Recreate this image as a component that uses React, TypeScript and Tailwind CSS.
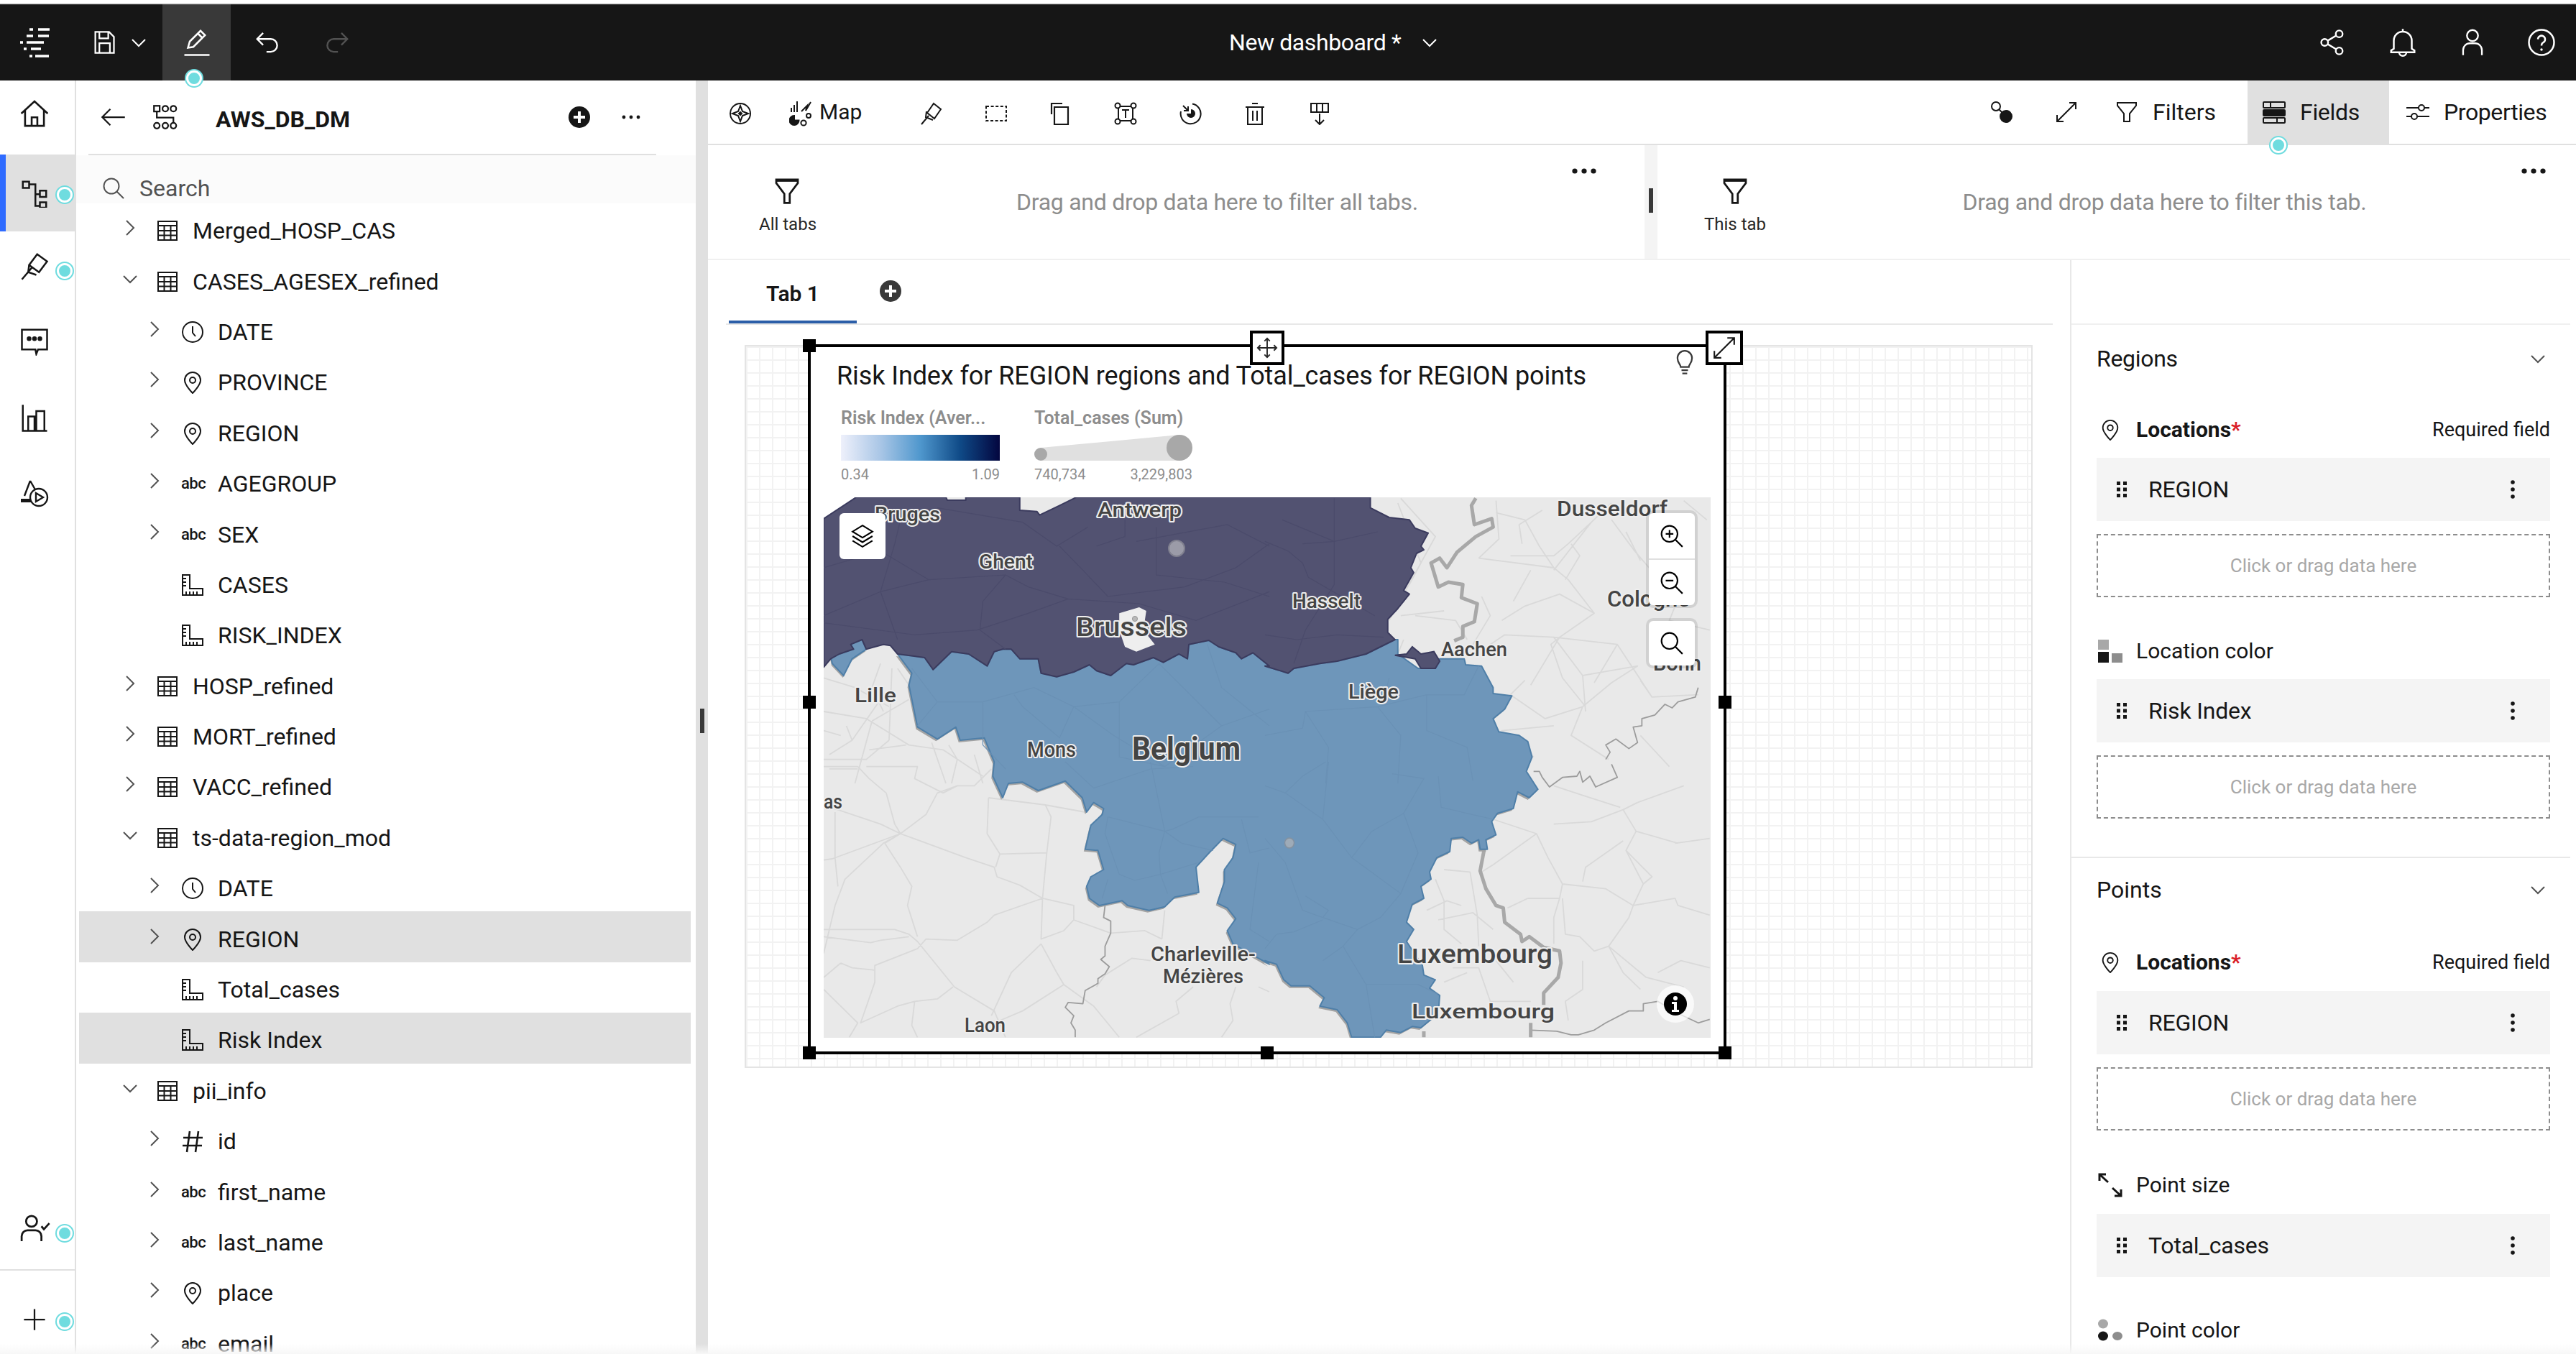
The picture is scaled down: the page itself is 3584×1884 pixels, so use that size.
import type { ReactNode } from "react";

type Pt = number[];

// map pieces were traced from four crops, each with its own scale
const q7 = (p: Pt[]) => p.map(([x, y]) => [x / 2.529, y / 3 - 2]);
const q8 = (p: Pt[]) => p.map(([x, y]) => [x / 2.489 + 614, y / 3 - 2]);
const q9 = (p: Pt[]) => p.map(([x, y]) => [x / 2.529, y / 3 + 368]);
const q10 = (p: Pt[]) => p.map(([x, y]) => [x / 2.489 + 614, y / 3 + 368]);
const pts = (p: Pt[]) => p.map(([x, y]) => `${x.toFixed(1)},${y.toFixed(1)}`).join(" ");

const LANG_BORDER: Pt[] = [
  ...q7([[0,715],[25,680],[55,660],[105,640],[95,620],[135,600],[150,640],[210,620],[235,625],[260,660],[355,675],[385,725],[450,650],[510,660],[575,710],[600,650],[630,640],[660,640],[690,680],[755,680],[765,740],[820,755],[880,735],[935,705],[960,730],[1010,750],[1065,700],[1090,705],[1160,675],[1195,695],[1250,660],[1280,680],[1285,620],[1355,603],[1390,630],[1450,655],[1470,680],[1510,655],[1568,710]]),
  ...q8([[0,710],[80,740],[100,720],[190,700],[250,690],[350,660],[450,600]]),
];

const FLANDERS: Pt[] = [
  ...q7([[0,95],[115,5],[430,5],[435,18],[500,18],[500,5],[690,5],[690,60],[750,65],[760,80],[830,40],[890,5]]),
  ...q8([[365,5],[365,50],[430,90],[500,100],[520,135],[565,155],[540,210],[550,225],[525,240],[505,300],[515,320],[480,395],[500,410],[460,470],[425,515],[425,570]]),
  ...[...LANG_BORDER].reverse(),
];

const VOEREN = q8([[450,665],[490,660],[510,630],[540,660],[585,650],[605,690],[590,720],[540,720],[520,680]]);
const COMINES = q7([[25,670],[55,660],[105,640],[95,620],[135,600],[150,640],[100,680],[70,750],[30,700]]);
const BRUSSELS = q7([[1040,490],[1110,465],[1135,480],[1125,560],[1165,620],[1100,650],[1060,630],[1040,560]]);

const WALLONIA: Pt[] = [
  ...LANG_BORDER.slice(9),
  ...q8([[460,600],[460,660],[530,720],[590,720],[605,680],[690,680],[695,705],[750,710],[790,800],[790,825],[855,835],[830,890],[790,930],[810,985],[880,1000],[910,1025],[925,1090],[905,1150]]),
  ...q10([[905,40],[945,115],[915,150],[875,125],[860,195],[805,215],[785,250],[800,305],[765,325],[770,365],[745,365],[740,325],[715,340],[685,315],[645,320],[640,375],[595,400],[570,460],[575,490],[540,520],[550,570],[510,595],[490,670],[515,700],[490,750],[545,850],[550,890],[590,910],[570,945],[605,975],[600,1050],[540,1110],[510,1105],[470,1130],[420,1120],[400,1150],[300,1150],[285,1090],[250,1035],[190,1020],[205,985],[155,935],[90,935],[65,910],[40,845],[0,830]]),
  ...q9([[1568,845],[1530,820],[1440,760],[1420,705],[1450,655],[1420,610],[1385,590],[1410,500],[1410,450],[1440,400],[1450,345],[1405,320],[1360,375],[1310,440],[1320,545],[1235,565],[1200,605],[1145,620],[1070,600],[1050,580],[970,600],[935,570],[925,520],[940,480],[985,450],[965,370],[920,365],[940,265],[980,220],[985,195],[950,170],[925,210],[910,150],[850,80],[755,120],[700,85],[650,90],[630,150],[595,60],[600,0]]),
  ...q7([[565,1010],[480,1020],[465,965],[400,1015],[330,965],[300,790],[310,740]]),
];

const ROADS_Q7 = "M0 900L150 930L300 1040L420 1060L560 1170M170 940L110 1200M0 1100H150L230 1020M230 1020L240 720M100 1020L200 850M0 760L110 800L230 880M300 850L170 940M380 1030L430 1200M160 1060L290 1040M20 1140H120M200 700L170 800L210 900M80 960L100 1020L20 1080M260 720L300 790M0 980L60 1000M440 1040L470 1100L450 1200M530 1080L560 1200";
const ROADS_Q8 = "M470 10L590 170L430 520M740 260L1000 300L1050 350L1140 490L1020 590L920 790M850 250H1000L1050 200L1130 110L1200 30M820 520L900 460L1020 410L1140 490M780 620L830 580L1000 590L1220 620L1340 840M900 770L850 830L970 930L1100 880L1200 780L1290 710L1100 750L1000 590M1000 960L820 980L930 1090M1100 880L1060 1000L1190 1100M900 100L950 210L1000 300M1300 770L1340 840L1500 830M1000 310L1130 110M460 30L540 280L500 370M520 500L660 520L700 600M800 20L810 180L740 260M1200 100L1280 230L1330 300M1450 20L1530 100M750 420L780 500L720 620M890 200L880 120L960 60M1060 200L1090 250L1040 350M920 310L860 440M1020 590L990 620L1030 760L1110 880M1220 620L1140 780M1300 1000L1400 1130M1420 460L1400 520L1540 560M470 500L620 480M1100 750L1110 900M480 600L460 660M900 100L800 70M1250 150L1300 270";
const ROADS_Q9 = "M0 700H250L300 720L330 750L460 940L600 1040L640 1150M300 730L200 745L165 755L0 730M270 300L500 400L600 440L610 480L690 515L770 570L880 600L880 660L1010 715L1130 705L1190 740M270 300L30 405L0 410M270 300L360 220L400 130L470 100L530 100L590 30M270 300L200 260L0 180M0 950L120 1090L90 1150M270 300L210 340L75 490L40 600L0 800M270 300L215 340L270 440L310 520L295 600L330 730M770 570L600 640L575 670L470 745L360 740L330 780L180 850L180 920L130 1090L260 1020L320 1000L400 990L455 940M785 380L770 570L765 740L845 705L880 660M765 760L820 880L845 930L700 1040L620 1080M620 385L785 380L800 230L780 180M580 150L575 300L620 385L605 440M765 760L660 880L590 1060M845 930L950 1020L1040 1150M1190 740L1200 620M1150 830L1085 820L990 890L960 940M1300 940L1240 1000L1250 1050L1100 1150M1450 940L1430 1010L1440 1080L1400 1150M1530 940L1568 960M40 210V400L50 520M0 20H120L160 70L220 130L250 260L270 300M150 20H330L320 70L420 130L470 100M580 150L780 180L920 210M60 840L100 860L180 870M0 900L60 840M320 1000L310 1100L330 1150";
const ROADS_Q10 = "M790 240L940 300L980 400L1030 510L1180 530L1275 600L1260 650L1190 770L1240 880L1300 950M1000 260L1130 250L1240 200L1285 290L1250 370L1310 510L1275 600L1420 570L1430 600M940 300L790 430L750 460M1290 170L1240 200M1290 170L1450 100M1030 510L1020 570L1000 650L1000 760M1030 570L1040 720L1090 730L1140 790L1190 770M840 610L910 570L1020 570M600 660L720 630L790 700M620 450L710 460L735 640L740 770M590 490L620 580L620 700L680 760M650 860L740 860L780 1000L920 1000M1100 830L1100 950L1040 1000L1050 1080M1285 290L1430 340M1250 370L1340 480L1310 510M1000 100L1100 140L1230 190M1360 880L1440 830L1540 860M1190 770L1320 900L1450 940M560 620L630 580L680 600M800 830L860 920M620 920L700 880M1420 340L1540 320M1430 600L1540 640M1100 500L1110 440L1240 330";

const INNER_DARK_Q7 = "M270 100L250 200L200 400L260 600M370 350L200 400L0 500M0 530L320 580L540 560L720 490L860 430L1110 450L1310 520L1568 400M640 330L560 440L550 560L640 640M830 210L920 320L1000 420L1270 380L1450 300L1568 200M1060 100V170L960 210M930 130L820 210L700 110L400 50M1170 130V330L1410 360L1568 420M1100 190L1420 120L1568 210M0 300L200 230L370 350L640 330L720 380L860 430";
const INNER_DARK_Q8 = "M0 190L80 230L130 280L150 340M60 100L240 190L390 150M130 200L240 190V370L140 560L100 700M0 580L110 600L250 580L410 590M150 340L380 500M240 10V190";
const INNER_BLUE_Q7 = "M310 720L400 860L560 860L740 800L880 880L1040 860L1180 700M880 880L830 1010L700 880L670 830M400 860L330 960M1040 860V1090L1200 1130L1400 960L1568 890M560 860V1040L640 1140M880 880L1020 1000L1200 1130M1180 700L1400 960M1350 620L1400 800L1568 960";
const INNER_BLUE_Q8 = "M0 1000L130 970L140 900L390 880L560 830L690 830L740 710M390 880L470 1000L460 1200M140 900L220 1050L210 1200M560 830V980L700 1050L720 1190M430 760L420 810";
const INNER_BLUE_Q9 = "M1000 230L1200 290L1260 340L1370 370M1200 290L1230 280L1320 230L1530 230M1200 290L1180 380L1185 470L1095 495L1040 470L990 300L1000 230M1185 470L1320 420M850 0L950 110M1150 0L1200 290M1470 240L1500 380L1568 360M1530 420L1500 700L1568 750M1000 490L980 570M1185 470L1210 550M950 110L1150 30L1300 20";
const INNER_BLUE_Q10 = "M0 100L70 130L200 240L300 400L470 550L400 650L320 700L200 650L130 620L70 420L0 320M200 240L220 0M70 130L130 60L210 0M300 400L370 290L480 215L550 70L440 50M480 215L530 380L470 550M320 700L270 770L350 930L380 1150M200 650L220 620L140 560M0 780L40 720L100 710L200 660M350 930H530L600 970M600 60L610 190L790 240M200 830L270 770";

const T_Q7 = "scale(0.3954 0.3333) translate(0 -6)";
const T_Q8 = "translate(614 -2) scale(0.4018 0.3333)";
const T_Q9 = "translate(0 368) scale(0.3954 0.3333)";
const T_Q10 = "translate(614 368) scale(0.4018 0.3333)";

const LABELS = [
  { t: "Bruges", x: 71, w: 91, y: 23, s: 28 },
  { t: "Antwerp", x: 381, w: 117, y: 17, s: 28 },
  { t: "Ghent", x: 216, w: 75, y: 90, s: 27 },
  { t: "Brussels", x: 351, w: 154, y: 181, s: 36 },
  { t: "Lille", x: 43, w: 58, y: 275, s: 28 },
  { t: "Mons", x: 283, w: 68, y: 351, s: 29 },
  { t: "Belgium", x: 429, w: 151, y: 350, s: 44, b: true },
  { t: "Hasselt", x: 652, w: 95, y: 144, s: 28 },
  { t: "Liège", x: 730, w: 70, y: 270, s: 28 },
  { t: "Aachen", x: 859, w: 92, y: 211, s: 28 },
  { t: "Dusseldorf", x: 1020, w: 154, y: 15, s: 30 },
  { t: "Cologne", x: 1090, w: 115, y: 141, s: 31 },
  { t: "Bonn", x: 1154, w: 67, y: 230, s: 30 },
  { t: "as", x: 0, w: 26, y: 423, s: 28 },
  { t: "Laon", x: 196, w: 57, y: 735, s: 27 },
  { t: "Charleville-", x: 455, w: 146, y: 635, s: 28 },
  { t: "Mézières", x: 472, w: 112, y: 666, s: 28 },
  { t: "Luxembourg", x: 798, w: 216, y: 636, s: 36 },
  { t: "Luxembourg", x: 818, w: 199, y: 715, s: 28 },
];

function Ic({ children, size = 32, box = 32, className = "" }: { children: ReactNode; size?: number; box?: number; className?: string }) {
  return (
    <svg width={size} height={size} viewBox={`0 0 ${box} ${box}`} fill="none" stroke="currentColor" strokeWidth={2} className={`shrink-0 ${className}`}>
      {children}
    </svg>
  );
}

const Down = ({ className = "" }: { className?: string }) => (
  <Ic size={24} box={24} className={className}><path d="M3 8l9 9 9-9" /></Ic>
);
const Right = ({ className = "" }: { className?: string }) => (
  <Ic size={24} box={24} className={className}><path d="M7 2l10 10L7 22" /></Ic>
);
const TableIcon = () => (
  <Ic><path d="M3 3h26v26H3zM3 9h26M3 16h26M3 22.5h26M11.5 9v20M20.5 9v20" /></Ic>
);
const ClockIcon = () => (
  <Ic><circle cx="16" cy="16" r="14" /><path d="M16 8v9l4 5" /></Ic>
);
const PinDrop = () => (
  <Ic><path d="M16 2A11 11 0 0 0 5 13c0 7 11 18 11 18s11-11 11-18A11 11 0 0 0 16 2z" /><circle cx="16" cy="13" r="4" /></Ic>
);
const RulerIcon = () => (
  <Ic><path d="M2 2h10v19h18v9H2zM2 7h5M2 12h5M2 17h5M7 25v5M12 25v5M17 25v5M22 25v5" /></Ic>
);
const HashIcon = () => (
  <Ic><path d="M12 2L8 31M24 2l-4 29M3 11h27M2 22h27" strokeWidth={2.6} /></Ic>
);
const SearchIcon = () => (
  <Ic><circle cx="13" cy="13" r="10.5" /><path d="M20.5 20.5L30 30" /></Ic>
);
const Funnel = ({ className = "" }: { className?: string }) => (
  <Ic size={40} box={32} className={className}><path d="M4 3h24v4l-9 12v10h-6V19L4 7z" strokeWidth={2.2} /><path d="M4 4h24" strokeWidth={3} /></Ic>
);
const Dots = () => (
  <svg width="34" height="8" viewBox="0 0 34 8" className="shrink-0"><circle cx="4" cy="4" r="3.6" fill="#161616" /><circle cx="17" cy="4" r="3.6" fill="#161616" /><circle cx="30" cy="4" r="3.6" fill="#161616" /></svg>
);
const SmallDots = () => (
  <svg width="26" height="6" viewBox="0 0 26 6" className="shrink-0"><circle cx="3" cy="3" r="2.4" fill="#161616" /><circle cx="13" cy="3" r="2.4" fill="#161616" /><circle cx="23" cy="3" r="2.4" fill="#161616" /></svg>
);
const Kebab = () => (
  <svg width="8" height="28" viewBox="0 0 8 28" className="shrink-0"><circle cx="4" cy="4" r="2.8" fill="#161616" /><circle cx="4" cy="14" r="2.8" fill="#161616" /><circle cx="4" cy="24" r="2.8" fill="#161616" /></svg>
);
const Grip = () => (
  <svg width="14" height="22" viewBox="0 0 14 22" className="shrink-0" fill="#161616">
    <rect width="5" height="5" /><rect x="9" width="5" height="5" /><rect y="8.5" width="5" height="5" /><rect x="9" y="8.5" width="5" height="5" /><rect y="17" width="5" height="5" /><rect x="9" y="17" width="5" height="5" />
  </svg>
);
const AddFilled = ({ fill }: { fill: string }) => (
  <svg width="32" height="32" viewBox="0 0 32 32" className="shrink-0"><circle cx="16" cy="16" r="15" fill={fill} /><path d="M16 8v16M8 16h16" stroke="#fff" strokeWidth={4} /></svg>
);

const Dot = ({ className }: { className: string }) => (
  <span className={`absolute w-[22px] h-[22px] rounded-full bg-[#6fdcdf] border-[3px] border-white ring-2 ring-[#6fdcdf] ${className}`} />
);

type Row = { label: string; level: 1 | 2; kind: string; open?: boolean; leaf?: boolean; sel?: boolean };

const ROWS: Row[] = [
  { label: "Merged_HOSP_CAS", level: 1, kind: "table" },
  { label: "CASES_AGESEX_refined", level: 1, kind: "table", open: true },
  { label: "DATE", level: 2, kind: "clock" },
  { label: "PROVINCE", level: 2, kind: "loc" },
  { label: "REGION", level: 2, kind: "loc" },
  { label: "AGEGROUP", level: 2, kind: "abc" },
  { label: "SEX", level: 2, kind: "abc" },
  { label: "CASES", level: 2, kind: "ruler", leaf: true },
  { label: "RISK_INDEX", level: 2, kind: "ruler", leaf: true },
  { label: "HOSP_refined", level: 1, kind: "table" },
  { label: "MORT_refined", level: 1, kind: "table" },
  { label: "VACC_refined", level: 1, kind: "table" },
  { label: "ts-data-region_mod", level: 1, kind: "table", open: true },
  { label: "DATE", level: 2, kind: "clock" },
  { label: "REGION", level: 2, kind: "loc", sel: true },
  { label: "Total_cases", level: 2, kind: "ruler", leaf: true },
  { label: "Risk Index", level: 2, kind: "ruler", leaf: true, sel: true },
  { label: "pii_info", level: 1, kind: "table", open: true },
  { label: "id", level: 2, kind: "hash" },
  { label: "first_name", level: 2, kind: "abc" },
  { label: "last_name", level: 2, kind: "abc" },
  { label: "place", level: 2, kind: "loc" },
  { label: "email", level: 2, kind: "abc" },
];

function KindIcon({ kind }: { kind: string }) {
  if (kind === "table") return <TableIcon />;
  if (kind === "clock") return <ClockIcon />;
  if (kind === "loc") return <PinDrop />;
  if (kind === "ruler") return <RulerIcon />;
  if (kind === "hash") return <HashIcon />;
  return <span className="w-[32px] text-center text-[22px] font-medium leading-none tracking-[-0.5px]">abc</span>;
}

function TreeRow({ row }: { row: Row }) {
  return (
    <div className={`flex items-center h-[70.4px] w-[851px] ml-[4px] shrink-0 pt-[6px] ${row.level === 1 ? "pl-[59px]" : "pl-[93px]"} ${row.sel ? "bg-[#e0e0e0]" : ""}`}>
      <span className="w-[24px] h-[24px] mb-[8px] text-[#525252] shrink-0">
        {row.leaf ? null : row.open ? <Down /> : <Right />}
      </span>
      <span className={`flex justify-center ${row.level === 1 ? "ml-[24px]" : "ml-[25px]"}`}><KindIcon kind={row.kind} /></span>
      <span className="ml-[19px] text-[32px] leading-none text-[#161616] whitespace-nowrap">{row.label}</span>
    </div>
  );
}

function Header() {
  return (
    <div className="flex items-center h-[106px] bg-[#161616] text-white relative shrink-0">
      <span className="w-[96px] flex justify-center">
        <svg width="42" height="42" viewBox="0 0 42 42" stroke="#fff" strokeWidth={3.4} fill="none">
          <path d="M26 3h16M14 3h5M26 12h15M10 12h9M10 21h24M1 21h4M16 30h14M6 30h4M22 40h19M14 40h4" />
        </svg>
      </span>
      <span className="ml-[1px] w-[96px] flex justify-center"><Ic size={36}><path d="M5 3h17l6 6v20H5zM10 3v8h11V3M10 29V17h13v12" /></Ic></span>
      <Down className="ml-[-12px]" />
      <span className="relative ml-[21px] w-[95px] h-[106px] bg-[#393939] flex items-center justify-center">
        <Ic size={40}><path d="M6 22l2-7L20 3l5 5-13 13zM17 6l5 5M2 30h28" /></Ic>
      </span>
      <span className="w-[99px] ml-[1px] flex justify-center"><Ic size={38}><path d="M11 5L4 12l7 7M4 12h16a7.5 7.5 0 0 1 0 15h-5" /></Ic></span>
      <span className="w-[96px] flex justify-center text-[#525252]"><Ic size={38}><path d="M21 5l7 7-7 7M28 12H12a7.5 7.5 0 0 0 0 15h5" /></Ic></span>
      <span className="ml-[1193px] text-[32px] leading-none tracking-[-0.4px] whitespace-nowrap">New dashboard *</span>
      <Down className="ml-[28px]" />
      <div className="ml-auto flex items-center pr-[0px]">
        <span className="w-[98px] flex justify-center"><Ic size={38}><circle cx="7" cy="16" r="4" /><circle cx="24" cy="6" r="4" /><circle cx="24" cy="26" r="4" /><path d="M10.5 14l10-6M10.5 18l10 6" /></Ic></span>
        <span className="w-[98px] flex justify-center"><Ic size={40}><path d="M16 1v3M6 23V14a10 10 0 0 1 20 0v9l3 2v2H3v-2zM12 27a4 4 0 0 0 8 0" /></Ic></span>
        <span className="w-[96px] flex justify-center"><Ic size={38}><circle cx="16" cy="8" r="6.5" /><path d="M5 31v-6a8 8 0 0 1 8-8h6a8 8 0 0 1 8 8v6" /></Ic></span>
        <span className="w-[96px] flex justify-center"><Ic size={40}><circle cx="16" cy="16" r="14" /><path d="M12 12.5a4 4 0 1 1 6 3.5c-1.4.8-2 1.6-2 3.5" /><circle cx="16" cy="24" r="1.4" fill="currentColor" stroke="none" /></Ic></span>
      </div>
      <Dot className="left-[259px] top-[92px] z-10" />
    </div>
  );
}

function Rail() {
  const cell = "w-[104px] flex justify-center items-center pr-[8px]";
  return (
    <div className="w-[106px] shrink-0 border-r-2 border-[#e0e0e0] flex flex-col relative h-full">
      <div className={`${cell} h-[103px] pb-[12px]`}><Ic size={42}><path d="M2 16L16 3l14 13M6 12v17h20V12M13 29v-9h6v9" /></Ic></div>
      <div className="w-[104px] flex justify-center items-center h-[107px] bg-[#e0e0e0] border-l-[8px] border-[#2f6bff] pr-[16px]">
        <Ic size={40}><rect x="3" y="3" width="7" height="7" /><path d="M10 6h7v24h5M17 17h5" /><rect x="22" y="13" width="7" height="7" /><rect x="22" y="26" width="7" height="6" /></Ic>
      </div>
      <div className={`${cell} h-[106px] pb-[10px]`}><Ic size={40}><path d="M19 3l11 8-9 12-11-8zM13 18L2 31M10 15l-1 8 9 3" /></Ic></div>
      <div className={`${cell} h-[106px] pb-[12px]`}><Ic size={40}><path d="M2 3h28v22H20l-2 5 -1-5H2z" /><circle cx="10" cy="13" r="1.6" fill="currentColor" /><circle cx="16" cy="13" r="1.6" fill="currentColor" /><circle cx="22" cy="13" r="1.6" fill="currentColor" /></Ic></div>
      <div className={`${cell} h-[106px] pb-[10px]`}><Ic size={40}><path d="M3 1v29h27M9 30V14h7v16M18 30V8h9v22" /></Ic></div>
      <div className={`${cell} h-[106px] pb-[10px]`}>
        <svg width="40" height="40" viewBox="0 0 40 40" fill="none" stroke="#161616" strokeWidth={2.4}>
          <path d="M14 1l-8 21M14 1l8 14" /><rect x="1" y="26" width="15" height="5" fill="#161616" stroke="none" />
          <circle cx="26" cy="24" r="12" fill="#fff" /><path d="M22 18l10 6-10 6z" />
        </svg>
      </div>
      <div className="mt-auto flex flex-col">
        <div className={`${cell} h-[116px] border-b-2 border-[#e0e0e0]`}><Ic size={44}><circle cx="13" cy="9" r="5.5" /><path d="M3 29v-5a6 6 0 0 1 6-6h8a6 6 0 0 1 6 6v5M23 14l2.5 3 5.5-6" /></Ic></div>
        <div className={`${cell} h-[116px] pt-[20px]`}><Ic size={36}><path d="M16 3v26M3 16h26" /></Ic></div>
      </div>
      <Dot className="left-[79px] top-[148px]" />
      <Dot className="left-[79px] top-[254px]" />
      <Dot className="left-[79px] top-[1593px]" />
      <Dot className="left-[79px] top-[1716px]" />
    </div>
  );
}

function DataPanel() {
  return (
    <div className="w-[862px] shrink-0 h-full overflow-hidden flex flex-col">
      <div className="h-[104px] shrink-0 ml-[17px] w-[790px] border-b-2 border-[#e0e0e0] flex items-center">
        <Ic size={36} className="ml-[17px]"><path d="M30 16H3M12 6L2 16l10 10" /></Ic>
        <Ic size={36} className="ml-[36px]"><rect x="2" y="2" width="7" height="7" /><circle cx="16" cy="5.5" r="3.5" /><circle cx="26" cy="5.5" r="3.5" /><circle cx="5.5" cy="26.5" r="3.5" /><circle cx="16" cy="26.5" r="3.5" /><circle cx="26" cy="26.5" r="3.5" /><path d="M5.5 9v7.5h20.5V23" /></Ic>
        <span className="ml-[52px] mt-[6px] text-[32px] font-bold leading-none text-[#161616] whitespace-nowrap">AWS_DB_DM</span>
        <span className="ml-auto mr-[22px] flex items-center gap-[43px]"><AddFilled fill="#161616" /><SmallDots /></span>
      </div>
      <div className="h-[67px] shrink-0 flex items-start pt-[30px] pl-[36px] bg-[#fbfbfb] text-[#525252] relative z-10">
        <SearchIcon />
        <span className="ml-[20px] text-[32px] leading-none">Search</span>
      </div>
      <div className="flex flex-col">
        {ROWS.map((r, i) => <TreeRow key={i} row={r} />)}
      </div>
    </div>
  );
}

function Toolbar() {
  const cell = "w-[90px] flex justify-center shrink-0";
  return (
    <div className="h-[90px] shrink-0 border-b-2 border-[#e0e0e0] flex items-center justify-between relative">
      <div className="flex items-center text-[#161616] mt-[4px]">
        <span className={cell}><Ic><circle cx="16" cy="16" r="14" /><path d="M16 5l3 8 8 3-8 3-3 8-3-8-8-3 8-3z" /><path d="M16 14l2 2-2 2-2-2z" fill="currentColor" /></Ic></span>
        <span className="w-[176px] flex items-center pl-[23px] shrink-0">
          <svg width="32" height="36" viewBox="0 0 32 36" fill="none" stroke="#161616" strokeWidth={2}>
            <path d="M3 10v6M7 6v10M11 1v15M17 15L25 7l-2 7 7-12" />
            <path d="M7 21a6.5 6.5 0 1 0 6.5 6.5H7z" fill="#161616" /><circle cx="20" cy="31" r="3.6" /><circle cx="27" cy="21" r="3" />
          </svg>
          <span className="ml-[10px] mb-[4px] text-[30px] leading-none">Map</span>
        </span>
        <span className={cell}><Ic><path d="M19 2l10 8-9 13-10-8zM12 19L2 31M9 13l-1 8 10 4" /></Ic></span>
        <span className={cell}><Ic><rect x="2" y="6" width="28" height="20" strokeDasharray="4 2.6" /></Ic></span>
        <span className={cell}><Ic><path d="M3 17V2h15M7 7h19v24H7z" strokeWidth={2.2} /></Ic></span>
        <span className={cell}><Ic><rect x="6" y="6" width="20" height="20" /><circle cx="5" cy="5" r="3.5" fill="#fff" /><circle cx="27" cy="5" r="3.5" fill="#fff" /><circle cx="5" cy="27" r="3.5" fill="#fff" /><circle cx="27" cy="27" r="3.5" fill="#fff" /><path d="M11 11h10M16 11v11" /></Ic></span>
        <span className={cell}><Ic><path d="M19 2.5A14 14 0 1 1 3 13M6 5l7 7M13 6v6H7" /><path d="M17 10a6 6 0 1 1-6 6h6z" fill="currentColor" stroke="none" /></Ic></span>
        <span className={cell}><Ic><path d="M12 2h8M3 7h26M6 7v24h20V7M13 12v14M19 12v14" /></Ic></span>
        <span className={cell}><Ic><rect x="4" y="2" width="24" height="12" /><path d="M12 2v12M20 2v12M16 16v15M10 25l6 6 6-6" /></Ic></span>
      </div>
      <div className="flex items-center h-[88px] w-[844px] shrink-0 text-[#161616] self-start">
        <span className={cell}><Ic><circle cx="8" cy="8" r="6" /><path d="M12 12l6 6" /><circle cx="22" cy="22" r="8" fill="currentColor" /></Ic></span>
        <span className={cell}><Ic><path d="M29 3L3 29M20 3h9v9M12 29H3v-9" /></Ic></span>
        <span className="w-[207px] flex items-center pl-[23px] shrink-0">
          <Ic><path d="M3 3h26v4l-9 11v11h-8V18L3 7z" /></Ic>
          <span className="ml-[20px] text-[32px] leading-none">Filters</span>
        </span>
        <span className="w-[197px] h-[88px] bg-[#e0e0e0] flex items-center pl-[21px] shrink-0">
          <Ic><rect x="1" y="2" width="30" height="8" rx="1" /><rect x="1" y="13" width="30" height="8" rx="1" fill="currentColor" /><rect x="1" y="24" width="30" height="7" rx="1" /><path d="M11 2v8M20 24v7" /></Ic>
          <span className="ml-[20px] text-[32px] leading-none tracking-[-0.3px]">Fields</span>
        </span>
        <span className="flex items-center pl-[24px]">
          <Ic><path d="M0 10h17M25 10h7M0 22h7M15 22h17" /><circle cx="21" cy="10" r="4" /><circle cx="11" cy="22" r="4" /></Ic>
          <span className="ml-[20px] text-[32px] leading-none tracking-[-0.4px]">Properties</span>
        </span>
      </div>
      <Dot className="left-[2174px] top-[79px] z-10" />
    </div>
  );
}

function FilterBar() {
  return (
    <div className="h-[160px] shrink-0 flex mr-[8px] border-b-2 border-[#f0f0f0]">
      <div className="w-[1303px] shrink-0 flex relative">
        <div className="w-[222px] flex flex-col items-center pt-[44px]">
          <Funnel className="ml-[-3px]" />
          <span className="mt-[14px] text-[24px] leading-none text-[#262626]">All tabs</span>
        </div>
        <span className="absolute left-[429px] top-[59px] w-[555px] text-center text-[32px] leading-[40px] tracking-[-0.27px] text-[#8d8d8d] whitespace-nowrap">Drag and drop data here to filter all tabs.</span>
        <span className="absolute left-[1202px] top-[32px]"><Dots /></span>
      </div>
      <div className="w-[18px] shrink-0 bg-[#f4f4f4] flex items-center justify-center">
        <span className="w-[6px] h-[34px] mt-[-4px] bg-[#393939]" />
      </div>
      <div className="flex-1 relative">
        <div className="w-[216px] flex flex-col items-center pt-[44px]">
          <Funnel />
          <span className="mt-[14px] text-[24px] leading-none text-[#262626]">This tab</span>
        </div>
        <span className="absolute left-[424px] top-[59px] w-[563px] text-center text-[32px] leading-[40px] tracking-[-0.27px] text-[#8d8d8d] whitespace-nowrap">Drag and drop data here to filter this tab.</span>
        <span className="absolute left-[1202px] top-[32px]"><Dots /></span>
      </div>
    </div>
  );
}

function MapView() {
  return (
    <div className="relative w-[1234px] h-[752px] ml-[18px] overflow-hidden bg-[#e9e9e9]">
      <svg width="1234" height="752" viewBox="0 0 1234 752" className="block">
        <g fill="none" stroke="#d9d9d9" strokeWidth={1.8} strokeLinejoin="round">
          <path d={ROADS_Q7} transform={T_Q7} vectorEffect="non-scaling-stroke" />
          <path d={ROADS_Q8} transform={T_Q8} vectorEffect="non-scaling-stroke" />
          <path d={ROADS_Q9} transform={T_Q9} vectorEffect="non-scaling-stroke" />
          <path d={ROADS_Q10} transform={T_Q10} vectorEffect="non-scaling-stroke" />
        </g>
        <g fill="none" stroke="#a8a8a8" strokeLinejoin="round">
          <path transform={T_Q8} strokeWidth={5} vectorEffect="non-scaling-stroke" d="M730 10L715 40L725 120L785 95L790 130L730 170L665 235L630 300L605 260L575 280L600 380L635 360L685 370L680 425L735 450L725 525L685 545L685 590L655 605" />
          <path transform={T_Q8} strokeWidth={1.8} stroke="#9c9c9c" vectorEffect="non-scaling-stroke" d="M1500 800L1490 840L1430 860L1410 885L1385 870L1350 915L1305 930V960L1275 965L1290 1030L1260 1055L1215 1015L1180 1040L1195 1070L1180 1100" />
          <path transform={T_Q9} strokeWidth={1.8} stroke="#9c9c9c" vectorEffect="non-scaling-stroke" d="M990 600L985 650L1010 665V715L990 770V810L975 825L1005 855L990 885L965 905V925L920 955L912 1010L860 1005L850 1025L880 1060L870 1090L885 1120V1150" />
          <path transform={T_Q10} strokeWidth={1.8} stroke="#9c9c9c" vectorEffect="non-scaling-stroke" d="M930 40H950L960 65L985 105L1030 65L1080 60L1090 40L1100 85L1125 60L1145 105L1220 65L1200 10M920 1120L1010 1125L1060 1140H1085L1140 1120L1180 1090L1260 1040H1310V1010L1360 1000L1430 1050L1500 1090L1540 1075" />
          <path transform={T_Q10} strokeWidth={5} vectorEffect="non-scaling-stroke" d="M760 360L745 455L765 530L800 600L825 610L830 670L885 720L890 750L915 730L965 775L1020 790L1025 840L1015 900L965 965V1015M920 1090V1150M550 1125V1150" />
        </g>
        <polygon points="0,0 46,0 0,30" fill="#ffffff" />
        <polygon points={pts(WALLONIA)} fill="#a3a3a3" transform="translate(-2 3)" />
        <polygon points={pts(COMINES)} fill="#a3a3a3" transform="translate(-1 3)" />
        <polygon points={pts(WALLONIA)} fill="#6e96ba" stroke="#4f7fa8" strokeWidth={2} strokeLinejoin="round" />
        <polygon points={pts(COMINES)} fill="#6e96ba" stroke="#4f7fa8" strokeWidth={2} />
        <polygon points={pts(FLANDERS)} fill="#525271" stroke="#3b3b5e" strokeWidth={2} strokeLinejoin="round" />
        <polygon points={pts(VOEREN)} fill="#525271" stroke="#3b3b5e" strokeWidth={2} />
        <g fill="none" stroke="#4b4b6b" strokeWidth={1.2}>
          <path d={INNER_DARK_Q7} transform={T_Q7} vectorEffect="non-scaling-stroke" />
          <path d={INNER_DARK_Q8} transform={T_Q8} vectorEffect="non-scaling-stroke" />
        </g>
        <g fill="none" stroke="#6a91b5" strokeWidth={1.2}>
          <path d={INNER_BLUE_Q7} transform={T_Q7} vectorEffect="non-scaling-stroke" />
          <path d={INNER_BLUE_Q8} transform={T_Q8} vectorEffect="non-scaling-stroke" />
          <path d={INNER_BLUE_Q9} transform={T_Q9} vectorEffect="non-scaling-stroke" />
          <path d={INNER_BLUE_Q10} transform={T_Q10} vectorEffect="non-scaling-stroke" />
        </g>
        <polygon points={pts(BRUSSELS)} fill="#eeeeee" />
        <circle cx="491" cy="71" r="11" fill="#9b9ba8" stroke="#80808f" strokeWidth={2} />
        <circle cx="433" cy="169" r="3.6" fill="#b8b8b8" stroke="#9a9a9a" />
        <ellipse cx="648" cy="481" rx="6.5" ry="7" fill="#9eabb8" stroke="#84919f" strokeWidth={1.5} />
        {LABELS.map((l, i) => (
          <text key={i} x={l.x} y={l.y} textLength={l.w} lengthAdjust="spacingAndGlyphs" fontSize={l.s} fontWeight={l.b ? 700 : 500} fontFamily="Roboto, sans-serif" dominantBaseline="central" fill="#444444" stroke="#eeeeee" strokeWidth={4} strokeLinejoin="round" paintOrder="stroke">{l.t}</text>
        ))}
      </svg>
      {/* map controls sit on top of the map */}
      <div className="absolute left-[22px] top-[22px] w-[64px] h-[64px] bg-white rounded-[6px] flex items-center justify-center text-black">
        <Ic size={34}><path d="M16 2L29 10l-13 8L3 10zM3 16l13 8 13-8M3 22l13 8 13-8" /></Ic>
      </div>
      <div className="absolute left-[1148px] top-[22px] w-[64px] bg-white rounded-[6px] shadow-[0_0_0_4px_rgba(0,0,0,0.1)] text-black">
        <div className="h-[65px] flex items-center justify-center border-b-2 border-[#e0e0e0]"><Ic size={34}><circle cx="13" cy="13" r="10.5" /><path d="M20.5 20.5L30 30M13 8v10M8 13h10" /></Ic></div>
        <div className="h-[63px] flex items-center justify-center"><Ic size={34}><circle cx="13" cy="13" r="10.5" /><path d="M20.5 20.5L30 30M8 13h10" /></Ic></div>
      </div>
      <div className="absolute left-[1148px] top-[172px] w-[64px] h-[62px] bg-white rounded-[6px] shadow-[0_0_0_4px_rgba(0,0,0,0.1)] flex items-center justify-center text-black">
        <Ic size={34}><circle cx="13" cy="13" r="10.5" /><path d="M20.5 20.5L30 30" /></Ic>
      </div>
      <div className="absolute left-[1159px] top-[679px] w-[52px] h-[52px] rounded-full bg-white/70 flex items-center justify-center">
        <svg width="32" height="32" viewBox="0 0 32 32"><circle cx="16" cy="16" r="16" fill="#000" /><circle cx="16" cy="8" r="3" fill="#fff" /><path d="M11 13h7v11h3v3H11v-3h3v-8h-3z" fill="#fff" /></svg>
      </div>
    </div>
  );
}

const Handle = ({ className }: { className: string }) => (
  <span className={`absolute w-[18px] h-[18px] bg-black ${className}`} />
);

function Widget() {
  return (
    <div className="absolute left-[86px] top-[-3px] w-[1278px] h-[988px] border-4 border-black bg-white">
      <div className="h-[80px] pl-[36px] flex items-center">
        <span className="text-[36px] leading-none tracking-[-0.1px] text-[#161616] whitespace-nowrap">Risk Index for REGION regions and Total_cases for REGION points</span>
      </div>
      <div className="h-[129px] pl-[42px] flex gap-[48px]">
        <div className="w-[221px] flex flex-col pt-[4px]">
          <span className="h-[30px] text-[25px] font-semibold leading-[30px] text-[#8d8d8d] whitespace-nowrap">Risk Index (Aver...</span>
          <div className="mt-[8px] h-[36px] bg-[linear-gradient(to_right,#eef0fb,#a9c6e6_25%,#4f97cd_50%,#0f4a87_75%,#03063f)]" />
          <div className="mt-[6px] h-[26px] flex justify-between text-[20px] leading-[26px] text-[#8d8d8d]"><span>0.34</span><span>1.09</span></div>
        </div>
        <div className="w-[220px] flex flex-col pt-[4px]">
          <span className="h-[30px] text-[25px] font-semibold leading-[30px] text-[#8d8d8d] whitespace-nowrap">Total_cases (Sum)</span>
          <svg width="220" height="36" viewBox="0 0 220 36" className="mt-[8px] block">
            <polygon points="9,18 202,0 202,36 9,36" fill="#e0e0e0" />
            <circle cx="9" cy="27" r="9" fill="#a8a8a8" />
            <circle cx="202" cy="18" r="18" fill="#a8a8a8" />
          </svg>
          <div className="mt-[6px] h-[26px] flex justify-between text-[20px] leading-[26px] text-[#8d8d8d]"><span>740,734</span><span>3,229,803</span></div>
        </div>
      </div>
      <MapView />
      <span className="absolute left-[1198px] top-[4px] text-[#393939]">
        <Ic size={36}><path d="M11 21c0-3-4-5-4-11a9 9 0 0 1 18 0c0 6-4 8-4 11zM12 25h8M13 29h6" /></Ic>
      </span>
      <Handle className="left-[-11px] top-[-11px]" />
      <Handle className="right-[-11px] top-[-11px]" />
      <Handle className="left-[-11px] bottom-[-11px]" />
      <Handle className="right-[-11px] bottom-[-11px]" />
      <Handle className="left-[-11px] top-[485px]" />
      <Handle className="right-[-11px] top-[485px]" />
      <Handle className="left-[626px] bottom-[-11px]" />
      <div className="absolute left-[611px] top-[-23px] w-[48px] h-[48px] bg-white border-4 border-black flex items-center justify-center text-[#262626]">
        <Ic size={30}><path d="M16 2v28M2 16h28M12 6l4-4 4 4M12 26l4 4 4-4M6 12l-4 4 4 4M26 12l4 4-4 4" /></Ic>
      </div>
      <div className="absolute left-[1245px] top-[-23px] w-[52px] h-[48px] bg-white border-4 border-black flex items-center justify-center text-[#161616]">
        <Ic size={34}><path d="M29 3L3 29M20 3h9v9M12 29H3v-9" /></Ic>
      </div>
    </div>
  );
}

function FieldBox({ label }: { label: string }) {
  return (
    <div className="h-[88px] bg-[#f4f4f4] flex items-center pl-[28px] pr-[48px]">
      <Grip />
      <span className="ml-[30px] text-[32px] leading-none tracking-[-0.2px] text-[#161616] flex-1">{label}</span>
      <Kebab />
    </div>
  );
}

const DropZone = () => (
  <div className="h-[88px] border-2 border-dashed border-[#8d8d8d] flex items-center justify-center text-[26px] leading-none text-[#a8a8a8]">Click or drag data here</div>
);

const SlotLabel = ({ icon, children, className, right }: { icon: ReactNode; children: ReactNode; className: string; right?: boolean }) => (
  <div className={`h-[40px] flex items-center ${className}`}>
    <span className="w-[38px] flex justify-center">{icon}</span>
    <span className="ml-[17px] text-[30px] leading-none text-[#161616] flex items-start">{children}</span>
    {right && <span className="ml-auto text-[27px] leading-none text-[#161616]">Required field</span>}
  </div>
);

const Required = () => (
  <>
    <span className="font-bold">Locations</span>
    <span className="text-[#da1e28] font-bold">*</span>
  </>
);

function FieldsPanel() {
  return (
    <div className="flex-1 border-l-2 border-[#e8e8e8] h-full overflow-hidden">
      <div className="h-[90px] border-b-2 border-[#f0f0f0] mr-[8px]" />
      <div className="mr-[8px] pr-[28px] pl-[35px] pb-[53px] border-b-2 border-[#e8e8e8]">
        <div className="h-[94px] flex items-center justify-between pr-[5px] text-[32px] leading-none tracking-[-0.3px] text-[#161616]">
          <span>Regions</span>
          <Down className="text-[#525252]" />
        </div>
        <SlotLabel className="mt-[32px]" right icon={<Ic size={30}><path d="M16 2A11 11 0 0 0 5 13c0 7 11 18 11 18s11-11 11-18A11 11 0 0 0 16 2z" /><circle cx="16" cy="13" r="4" /></Ic>}><Required /></SlotLabel>
        <div className="mt-[19px]"><FieldBox label="REGION" /></div>
        <div className="mt-[18px]"><DropZone /></div>
        <SlotLabel className="mt-[55px]" icon={<svg width="34" height="32" viewBox="0 0 34 32"><rect width="15" height="14" fill="#a8a8a8" /><rect y="17" width="15" height="15" fill="#161616" /><rect x="19" y="19" width="15" height="13" fill="#8d8d8d" /></svg>}>Location color</SlotLabel>
        <div className="mt-[19px]"><FieldBox label="Risk Index" /></div>
        <div className="mt-[18px]"><DropZone /></div>
      </div>
      <div className="mr-[8px] pr-[28px] pl-[35px]">
        <div className="h-[88px] flex items-center justify-between pr-[5px] text-[32px] leading-none text-[#161616]">
          <span>Points</span>
          <Down className="text-[#525252]" />
        </div>
        <SlotLabel className="mt-[37px]" right icon={<Ic size={30}><path d="M16 2A11 11 0 0 0 5 13c0 7 11 18 11 18s11-11 11-18A11 11 0 0 0 16 2z" /><circle cx="16" cy="13" r="4" /></Ic>}><Required /></SlotLabel>
        <div className="mt-[20px]"><FieldBox label="REGION" /></div>
        <div className="mt-[18px]"><DropZone /></div>
        <SlotLabel className="mt-[56px]" icon={<svg width="34" height="34" viewBox="0 0 34 34" fill="none" stroke="#161616" strokeWidth={3}><path d="M2 2l12 11M2 11V2h9M32 32L20 21M32 23v9h-9" /></svg>}>Point size</SlotLabel>
        <div className="mt-[20px]"><FieldBox label="Total_cases" /></div>
        <SlotLabel className="mt-[54px]" icon={<svg width="34" height="32" viewBox="0 0 34 32"><ellipse cx="7" cy="7" rx="7" ry="6.5" fill="#a8a8a8" /><ellipse cx="7" cy="24" rx="7" ry="6.5" fill="#161616" /><ellipse cx="27" cy="24" rx="7" ry="6" fill="#8d8d8d" /></svg>}>Point color</SlotLabel>
      </div>
    </div>
  );
}

export default function App() {
  return (
    <div className="w-[3584px] h-[1884px] overflow-hidden relative flex flex-col bg-white font-['Roboto',sans-serif] text-[#161616]">
      <div className="h-[6px] shrink-0 bg-white border-b-2 border-[#e0e0e0]" />
      <Header />
      <div className="flex flex-1 min-h-0">
        <Rail />
        <DataPanel />
        {/* resize strip between the data tree and the canvas */}
        <div className="w-[17px] shrink-0 bg-[#e0e0e0] flex items-center justify-center">
          <span className="w-[6px] h-[34px] mb-[-9px] bg-[#393939]" />
        </div>
        <div className="flex-1 min-w-0 flex flex-col">
          <Toolbar />
          <FilterBar />
          <div className="flex-1 min-h-0 flex">
            <div className="w-[1895px] shrink-0 flex flex-col">
              <div className="h-[90px] shrink-0 ml-[25px] mr-[24px] border-b-2 border-[#e8e8e8] flex">
                <span className="w-[178px] ml-[4px] h-[88px] border-b-4 border-[#2b5ea8] flex items-center justify-center text-[30px] font-semibold leading-none pt-[10px]">Tab 1</span>
                <span className="ml-[31px] mt-[27px] text-[#393939]"><AddFilled fill="#393939" /></span>
              </div>
              <div className="relative ml-[51px] mt-[28px] w-[1792px] h-[1006px] border-2 border-[#e4e4e4] bg-[linear-gradient(to_right,#f2f2f2_2px,transparent_2px),linear-gradient(to_bottom,#f2f2f2_2px,transparent_2px)] bg-[size:18px_18px]">
                <Widget />
              </div>
            </div>
            <FieldsPanel />
          </div>
        </div>
      </div>
      <div className="absolute bottom-0 left-0 right-0 h-[14px] bg-gradient-to-b from-transparent to-[#f7f7f7] pointer-events-none" />
    </div>
  );
}
